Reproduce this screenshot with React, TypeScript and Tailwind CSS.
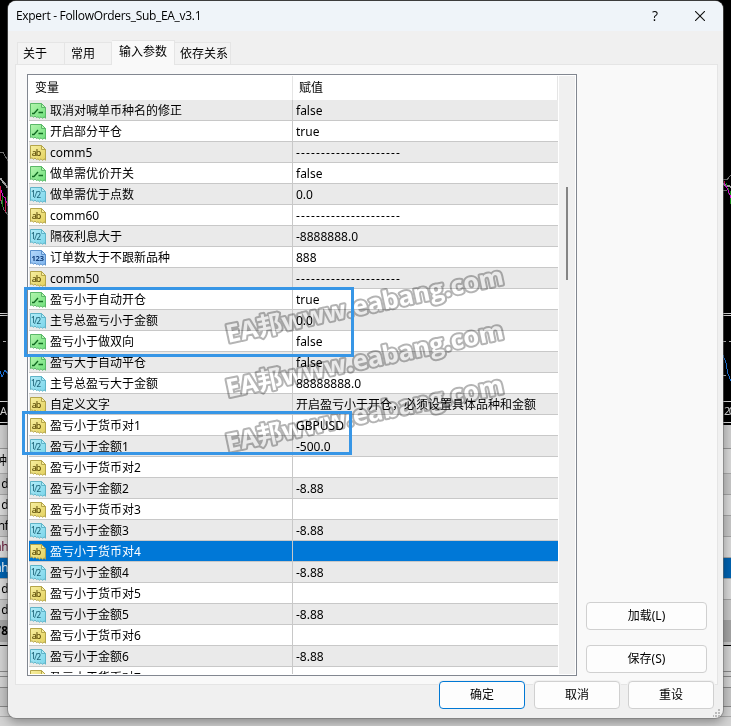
import clsx from "clsx";

type IconKind = "bool" | "text" | "double" | "int";

interface Param {
  kind: IconKind;
  name: string;
  value?: string;
}

const DASHES = "---------------------";

const params: Param[] = [
  { kind: "bool", name: "取消对喊单币种名的修正", value: "false" },
  { kind: "bool", name: "开启部分平仓", value: "true" },
  { kind: "text", name: "comm5", value: DASHES },
  { kind: "bool", name: "做单需优价开关", value: "false" },
  { kind: "double", name: "做单需优于点数", value: "0.0" },
  { kind: "text", name: "comm60", value: DASHES },
  { kind: "double", name: "隔夜利息大于", value: "-8888888.0" },
  { kind: "int", name: "订单数大于不跟新品种", value: "888" },
  { kind: "text", name: "comm50", value: DASHES },
  { kind: "bool", name: "盈亏小于自动开仓", value: "true" },
  { kind: "double", name: "主号总盈亏小于金额", value: "0.0" },
  { kind: "bool", name: "盈亏小于做双向", value: "false" },
  { kind: "bool", name: "盈亏大于自动平仓", value: "false" },
  { kind: "double", name: "主号总盈亏大于金额", value: "88888888.0" },
  {
    kind: "text",
    name: "自定义文字",
    value: "开启盈亏小于开仓，必须设置具体品种和金额",
  },
  { kind: "text", name: "盈亏小于货币对1", value: "GBPUSD" },
  { kind: "double", name: "盈亏小于金额1", value: "-500.0" },
  { kind: "text", name: "盈亏小于货币对2" },
  { kind: "double", name: "盈亏小于金额2", value: "-8.88" },
  { kind: "text", name: "盈亏小于货币对3" },
  { kind: "double", name: "盈亏小于金额3", value: "-8.88" },
  { kind: "text", name: "盈亏小于货币对4" },
  { kind: "double", name: "盈亏小于金额4", value: "-8.88" },
  { kind: "text", name: "盈亏小于货币对5" },
  { kind: "double", name: "盈亏小于金额5", value: "-8.88" },
  { kind: "text", name: "盈亏小于货币对6" },
  { kind: "double", name: "盈亏小于金额6", value: "-8.88" },
  { kind: "text", name: "盈亏小于货币对7" },
];

const SELECTED = 21;

const iconColors = {
  bool: { from: "#b4f5ae", to: "#6fe07c", line: "#5bb868", ink: "#126b22" },
  text: { from: "#f7efa0", to: "#e3d15e", line: "#b5a54a", ink: "#5c4d08" },
  double: { from: "#b2ecf8", to: "#7ad5ea", line: "#5fb4c8", ink: "#1d6478" },
  int: { from: "#b5d8fa", to: "#7db4ee", line: "#5a90cc", ink: "#123f7c" },
};

const ParamIcon = ({ kind }: { kind: IconKind }) => {
  const c = iconColors[kind];
  return (
    <svg width="16" height="16" viewBox="0 0 16 16" className="shrink-0">
      <defs>
        <linearGradient id={`fill-${kind}`} x1="0" y1="0" x2="1" y2="1">
          <stop offset="0" stopColor={c.from} />
          <stop offset="1" stopColor={c.to} />
        </linearGradient>
      </defs>
      <path
        d="M.5.5H11.5L15.5 4.5V15.2L14 13.8L12.6 15.4L11 13.8L9.5 15.2L8 13.8L6.5 14.6L5 13L3.5 14.2L2 12.8L.5 13.6Z"
        fill={`url(#fill-${kind})`}
        stroke={c.line}
      />
      <path d="M11.5.5V4.5H15.5Z" fill={c.from} stroke={c.line} />
      {kind === "bool" && (
        <path
          d="M2 10.5H4L8 6M8.5 9.5H13"
          fill="none"
          stroke={c.ink}
          strokeWidth="1.3"
        />
      )}
      {kind === "text" && (
        <text x="1.8" y="11" fill={c.ink} textLength="9.6" className="text-[9px] font-medium">
          ab
        </text>
      )}
      {kind === "double" && (
        <>
          <text x="1" y="9.5" fill={c.ink} className="text-[8px] font-medium">
            1
          </text>
          <path d="M4.5 11L7 4" stroke={c.ink} strokeWidth=".8" />
          <text x="6.6" y="11" fill={c.ink} className="text-[8px] font-medium">
            2
          </text>
        </>
      )}
      {kind === "int" && (
        <text x="1.5" y="11" fill={c.ink} textLength="12.5" className="text-[7.5px] font-bold">
          123
        </text>
      )}
    </svg>
  );
};

const ParamRow = ({ param, index }: { param: Param; index: number }) => {
  const selected = index === SELECTED;
  return (
    <div
      className={clsx(
        "flex h-[21px] shrink-0 border-b border-[#c8c8c8]",
        selected
          ? "bg-[#0078d7] text-white"
          : index % 2 === 0
            ? "bg-[#eaeaea]"
            : "bg-white",
      )}
    >
      <div className="flex w-[264px] items-start gap-1 border-r border-[#c8c8c8] pt-[3px] pl-px">
        <ParamIcon kind={param.kind} />
        <span className="leading-4 whitespace-nowrap">{param.name}</span>
      </div>
      <div className="pt-[3px] pl-[3px] leading-4 whitespace-nowrap">
        {param.value === DASHES ? (
          <span className="tracking-[1.14px]">{DASHES}</span>
        ) : (
          param.value
        )}
      </div>
    </div>
  );
};

const Button = ({
  label,
  className,
}: {
  label: string;
  className?: string;
}) => (
  <button
    className={clsx(
      "h-7 rounded border bg-[#fdfdfd] pb-px text-center",
      className,
    )}
  >
    {label}
  </button>
);

const Tab = ({ label, className }: { label: string; className?: string }) => (
  <div
    className={clsx(
      "h-[22px] border border-b-0 border-[#e5e5e5] bg-[#f3f3f3] pt-[3px] pl-[5px] leading-4",
      className,
    )}
  >
    {label}
  </div>
);

const orders = ["d", "d", "nf", "nh", "nh", "d", "d"];

// Terminal window left and right of the dialog
const Terminal = () => (
  <div className="absolute inset-0 flex flex-col bg-[#d4d4d4]">
    <svg width="731" height="425" className="shrink-0 bg-black">
      <g fill="none" shapeRendering="crispEdges">
        <path d="M0 313.5H731M0 315.5H731M0 401.5H731M0 422.5H731" stroke="#dcdcdc" />
        <path d="M3 341.5H6M723 341.5H726M729 341.5H731M723 375.5H726" stroke="#bbb" />
        <path d="M0 152.5H3L8 161M0 197L4 210L8 215M723 179.5H727L731 175M723 190.5H727" stroke="#777" />
        <path d="M0 178L8 188M723 184L731 187" stroke="#aaa" strokeWidth="2" />
        <path d="M.5 186V201M5.5 197V212M724.5 181V185" stroke="#d9164a" />
        <path d="M2.5 193V207M7.5 196V205M726.5 183V187M728.5 188V194M730.5 191V204" stroke="#168a16" />
        <path d="M1 190L3 196L5 198L8 206M724 183L728 190L731 198" stroke="#e010e0" />
        <path d="M0 371L2 377L5 370L8 374M723 355L726 363L728 374L731 381" stroke="#1d74db" />
      </g>
      <text x="0" y="415" fill="#ddd" className="text-[11px]">
        A
      </text>
      <text x="724" y="415" fill="#ddd" textLength="11" className="text-[11px]">
        20
      </text>
    </svg>
    <div className="h-[24px] shrink-0 border-b border-[#969696] bg-[#d0d0d0]" />
    <div className="h-[25px] shrink-0 border-b border-[#aaa] bg-[#dadada] pt-1">
      <div className="flex w-[7px] justify-end overflow-hidden leading-4">种</div>
    </div>
    {orders.map((order, i) => (
      <div
        key={i}
        className={clsx(
          "h-[21px] shrink-0 border-b border-[#a5a5a5] pt-[2px]",
          i === 4
            ? "bg-[#0063b1] text-white"
            : i % 2 === 0
              ? "bg-[#c8c8c8]"
              : "bg-[#dadada]",
          i === 3 && "text-[#601030]",
        )}
      >
        <div className="flex w-2 justify-end overflow-hidden leading-4 tracking-[-0.6px]">
          {order}
        </div>
      </div>
    ))}
    <div className="h-[21px] shrink-0 bg-[#a5a5a5] pt-[2px]">
      <div className="flex w-2 justify-end overflow-hidden leading-4 font-bold">
        78
      </div>
    </div>
    <div className="h-[3px] shrink-0 bg-[#c8c8c8]" />
    <div className="h-[27px] shrink-0 border-t border-b border-t-black border-b-[#888]" />
    <div className="h-[5px] shrink-0 border-b border-[#888]" />
    <div className="h-[11px] shrink-0 border-b border-[#888]" />
    <div className="h-[19px] shrink-0 border-b border-[#888] bg-[#c8c8c8]" />
    <div className="h-[10px] shrink-0 border-b border-[#aaa]" />
  </div>
);

// Darkens the rows below it, so the values stay readable through the letters
const Watermark = () => (
  <svg
    width="731"
    height="726"
    className="pointer-events-none absolute inset-0 mix-blend-multiply"
  >
    {[343, 397.5, 452].map((y) => (
      <text
        key={y}
        transform={`translate(228 ${y}) rotate(-12)`}
        textLength="283"
        lengthAdjust="spacingAndGlyphs"
        fill="#fff"
        stroke="#b4b4b4"
        strokeWidth="4"
        strokeLinejoin="round"
        paintOrder="stroke"
        className="font-['Open_Sans','Noto_Sans_CJK_SC',sans-serif] text-[25px] font-bold"
      >
        EA邦www.eabang.com
      </text>
    ))}
  </svg>
);

const App = () => {
  return (
    <div className="relative h-[726px] w-[731px] overflow-hidden font-['Noto_Sans','Noto_Sans_CJK_SC',sans-serif] text-xs text-black">
      <Terminal />

      <div className="absolute top-px left-2 flex h-[717px] w-[715px] flex-col overflow-hidden rounded-lg bg-[#f0f0f0] shadow-[0_0_0_1px_#70707088,0_4px_12px_#00000060]">
        <div className="flex h-[30px] shrink-0 items-center bg-[#eff4f9] pl-2">
          <span className="flex-1 font-['Open_Sans',sans-serif] text-[12px] tracking-[-0.31px]">
            Expert - FollowOrders_Sub_EA_v3.1
          </span>
          <span className="mr-[37px] font-['Open_Sans',sans-serif] text-sm">?</span>
          <svg width="10" height="10" className="mr-[18px]">
            <path d="M0 0L10 10M10 0L0 10" stroke="#111" strokeWidth="1.1" />
          </svg>
        </div>

        <div className="flex h-[33px] shrink-0 items-end pl-[9px]">
          <Tab label="关于" className="w-[48px]" />
          <Tab label="常用" className="w-[47px] border-l-0 pl-[6px]" />
          <Tab
            label="输入参数"
            className="relative -mb-px h-[25px] w-[63px] border-l-0 bg-[#f9f9f9] pl-[7px]"
          />
          <Tab label="依存关系" className="w-[56px] border-l-0 pl-[4px]" />
        </div>

        <div className="ml-[7px] flex h-[621px] w-[703px] shrink-0 border border-[#e5e5e5] bg-[#f9f9f9] pt-[9px] pl-[11px]">
          <div className="flex h-[602px] w-[550px] border border-[#828790] bg-white p-px">
            <div className="flex w-[529px] flex-col overflow-hidden">
              <div className="flex h-[24px] shrink-0 border-r border-[#e5e5e5] leading-6">
                <div className="w-[264px] border-r border-[#e5e5e5] pl-1.5">
                  变量
                </div>
                <div className="pl-1.5">赋值</div>
              </div>
              {params.map((param, i) => (
                <ParamRow key={i} param={param} index={i} />
              ))}
            </div>
            <div className="ml-px w-4 bg-[#f0f0f0] pt-[111px] pl-[7px]">
              <div className="h-[93px] w-0.5 bg-[#858585]" />
            </div>
          </div>

          <div className="ml-[9px] flex h-[599px] flex-col justify-end gap-[15px]">
            <Button label="加载(L)" className="w-[121px] border-[#d0d0d0]" />
            <Button label="保存(S)" className="w-[121px] border-[#d0d0d0]" />
          </div>
        </div>

        <div className="relative -mt-1 flex justify-end gap-[9px] pr-[9px]">
          <Button
            label="确定"
            className="w-[86px] border-[#0078d4] ring-1 ring-[#f0f0f0]"
          />
          <Button
            label="取消"
            className="w-[86px] border-[#d0d0d0] ring-1 ring-[#f0f0f0]"
          />
          <Button
            label="重设"
            className="-ml-px w-[86px] border-[#d0d0d0] ring-1 ring-[#f0f0f0]"
          />
        </div>
        <svg width="8" height="8" className="absolute right-[2px] bottom-[1px]">
          <path
            d="M5 0h2v2h-2zM5 3h2v2h-2zM2 3h2v2h-2zM5 6h2v2h-2zM2 6h2v2h-2zM-1 6h2v2h-2z"
            fill="#bbb"
          />
        </svg>
      </div>

      <Watermark />

      <div className="absolute top-[287px] left-6 h-[70px] w-[330px] border-3 border-[#3796e6]" />
      <div className="absolute top-[411px] left-[22px] h-[44px] w-[330px] border-3 border-[#3796e6]" />
    </div>
  );
};

export default App;
